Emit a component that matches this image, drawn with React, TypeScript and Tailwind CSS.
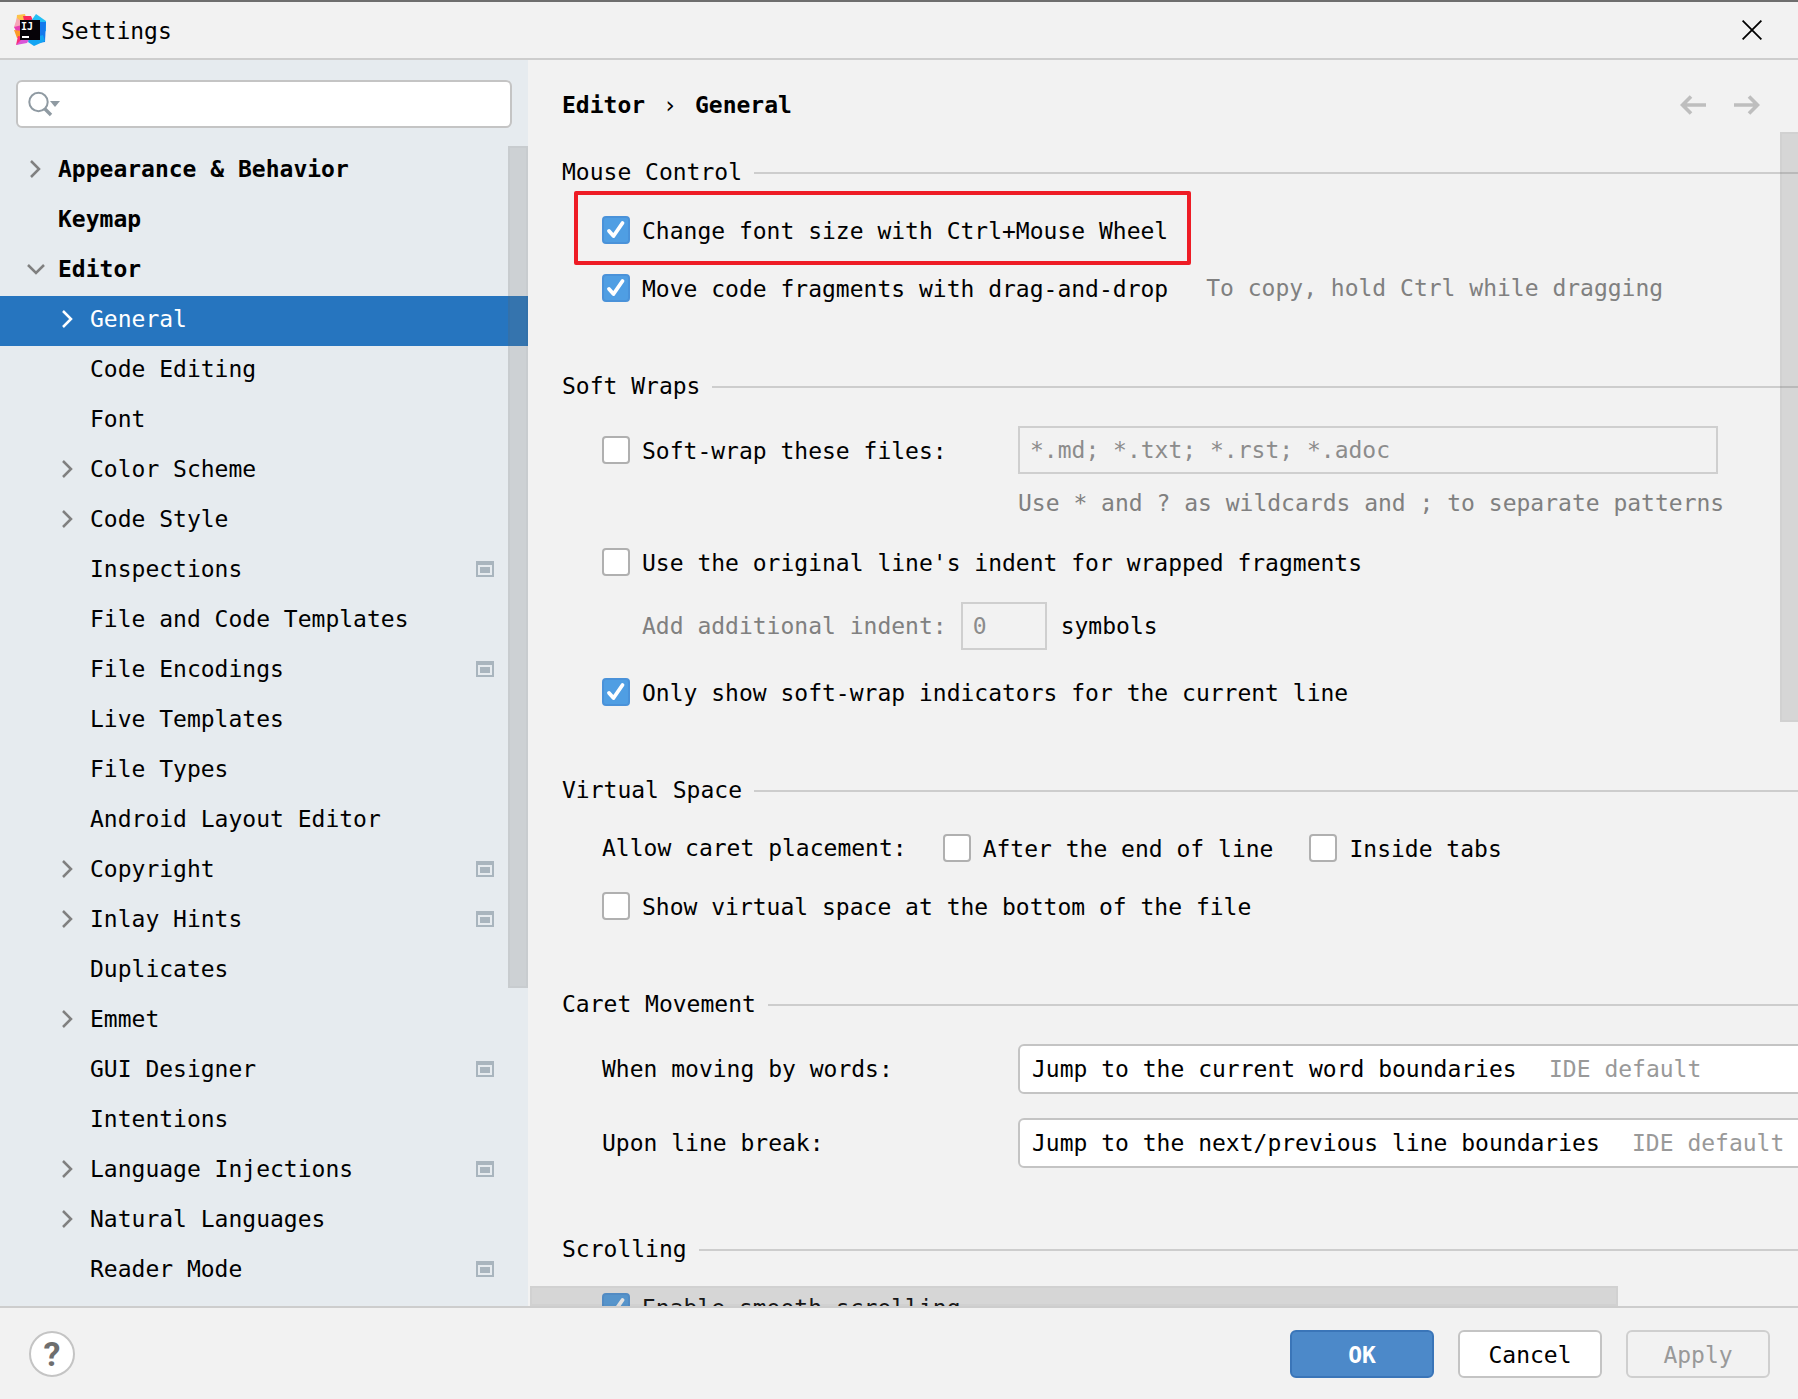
import React, { useState } from "react";

type TreeItem = {
  label: string;
  level: number;
  arrow?: "right" | "down";
  project?: boolean;
};

const treeItems: TreeItem[] = [
  { label: "Appearance & Behavior", level: 1, arrow: "right" },
  { label: "Keymap", level: 1 },
  { label: "Editor", level: 1, arrow: "down" },
  { label: "General", level: 2, arrow: "right" },
  { label: "Code Editing", level: 2 },
  { label: "Font", level: 2 },
  { label: "Color Scheme", level: 2, arrow: "right" },
  { label: "Code Style", level: 2, arrow: "right" },
  { label: "Inspections", level: 2, project: true },
  { label: "File and Code Templates", level: 2 },
  { label: "File Encodings", level: 2, project: true },
  { label: "Live Templates", level: 2 },
  { label: "File Types", level: 2 },
  { label: "Android Layout Editor", level: 2 },
  { label: "Copyright", level: 2, arrow: "right", project: true },
  { label: "Inlay Hints", level: 2, arrow: "right", project: true },
  { label: "Duplicates", level: 2 },
  { label: "Emmet", level: 2, arrow: "right" },
  { label: "GUI Designer", level: 2, project: true },
  { label: "Intentions", level: 2 },
  { label: "Language Injections", level: 2, arrow: "right", project: true },
  { label: "Natural Languages", level: 2, arrow: "right" },
  { label: "Reader Mode", level: 2, project: true },
];

const Logo = () => (
  <svg width="34" height="34" viewBox="0 0 34 34" aria-hidden="true">
    <path d="M4 2 L12 1 L15 12 L8 18 L3 12 Z" fill="#fdc24b" />
    <path d="M4 5 L1 14 L6 17 L9 9 Z" fill="#f7a6b8" />
    <path d="M10 3 L18 3 L21 10 L12 12 Z" fill="#fb2a5b" />
    <path d="M1 14 L9 12 L10 22 L3 18 Z" fill="#e83fb2" />
    <path d="M1 17 L9 18 L9 26 L4 25 Z" fill="#fc9a28" />
    <path d="M5 23 L12 24 L17 27 L3 32 Z" fill="#fa2f77" />
    <path d="M9 26 L17 25 L14 30 L3 32 Z" fill="#d955d8" />
    <path d="M23 1 L33 8 L33 18 L26 20 L18 8 Z" fill="#22bff5" />
    <path d="M26 9 L33 9 L32 29 L25 30 Z" fill="#1479ec" />
    <path d="M16 26 L30 22 L32 28 L21 33 L15 29 Z" fill="#13a5f3" />
    <rect x="7" y="7" width="20" height="20" fill="#060308" />
    <rect x="9" y="23" width="7" height="2" fill="#ffffff" />
    <text x="8" y="17" fontSize="10" fontWeight="700" fill="#ffffff">IJ</text>
  </svg>
);

const Chevron = ({ direction, className }: { direction: "right" | "down"; className: string }) => (
  <svg width="20" height="20" viewBox="0 0 20 20" fill="none" stroke="currentColor" strokeWidth="2.5" className={className} aria-hidden="true">
    {direction === "right" ? <path d="M5 2 L13 10 L5 18" /> : <path d="M2 6 L10 14 L18 6" />}
  </svg>
);

const ProjectIcon = () => (
  <svg width="18" height="16" viewBox="0 0 18 16" aria-hidden="true">
    <path fillRule="evenodd" d="M0 0 H18 V16 H0 Z M2 4 V14 H16 V4 Z" fill="#a9b5be" />
    <rect x="4" y="6" width="10" height="6" fill="#a9b5be" />
  </svg>
);

const Arrow = ({ back }: { back?: boolean }) => (
  <svg width="26" height="20" viewBox="0 0 26 20" fill="none" stroke="#bebebe" strokeWidth="3.6" aria-hidden="true">
    {back ? <path d="M26 10 H3 M11 1.4 L2.5 10 L11 18.6" /> : <path d="M0 10 H23 M15 1.4 L23.5 10 L15 18.6" />}
  </svg>
);

const CheckOption = ({ id, label, checked }: { id: string; label: string; checked?: boolean }) => (
  <div className="flex shrink-0 items-center gap-3">
    <span className="grid size-7">
      <input
        type="checkbox"
        id={id}
        defaultChecked={checked}
        className="peer col-start-1 row-start-1 size-7 appearance-none rounded-sm border-2 border-[#b0b0b0] bg-white checked:border-[#4a92d9] checked:bg-[#4f9ee3]"
      />
      <svg
        viewBox="0 0 28 28"
        fill="none"
        stroke="#ffffff"
        strokeWidth="3.8"
        strokeLinecap="round"
        strokeLinejoin="round"
        className="pointer-events-none invisible col-start-1 row-start-1 size-7 peer-checked:visible"
        aria-hidden="true"
      >
        <path d="M7 15 L11.5 20 L20.5 7" />
      </svg>
    </span>
    <label htmlFor={id} className="pt-[2px]">{label}</label>
  </div>
);

const SectionTitle = ({ title }: { title: string }) => (
  <div className="flex h-10 items-center gap-3">
    <h2 className="shrink-0 pb-[2px]">{title}</h2>
    <div className="h-[2px] flex-1 bg-[#cdcdcd]" />
  </div>
);

const ComboRow = ({ id, label, value }: { id: string; label: string; value: string }) => (
  <div className="flex h-[58px] items-center">
    <label htmlFor={id} className="w-[416px] shrink-0">{label}</label>
    <div className="flex h-[50px] w-[820px] shrink-0 items-center gap-8 rounded-md border-2 border-[#c4c4c4] bg-white px-3">
      <select id={id} className="shrink-0 appearance-none bg-transparent">
        <option>{value}</option>
      </select>
      <span className="shrink-0 text-[#999999]">IDE default</span>
    </div>
  </div>
);

const App = () => {
  const [selected, setSelected] = useState("General");
  const [search, setSearch] = useState("");

  return (
    <div className="flex h-screen flex-col overflow-hidden border-t-2 border-[#6e6e6e] bg-[#f2f2f2] font-['DejaVu_Sans_Mono',monospace] text-[23px] leading-[30px] text-black">
      <header className="flex h-[58px] shrink-0 items-center border-b-2 border-[#cdcdcd] pl-[13px] pr-9">
        <Logo />
        <h1 className="flex-1 pl-[14px] pt-[2px]">Settings</h1>
        <button type="button" aria-label="Close">
          <svg width="20" height="20" viewBox="0 0 20 20" stroke="#000000" strokeWidth="1.8" aria-hidden="true">
            <path d="M0.6 0.6 L19.4 19.4 M19.4 0.6 L0.6 19.4" />
          </svg>
        </button>
      </header>

      <div className="flex min-h-0 flex-1">
        <aside className="flex w-[528px] shrink-0 flex-col bg-[#e6ebef]">
          <div className="px-4 pb-[18px] pt-5">
            <div className="flex h-12 items-center rounded-md border-2 border-[#c4c4c4] bg-white pl-[10px]">
              <svg width="34" height="26" viewBox="0 0 34 26" fill="none" aria-hidden="true">
                <circle cx="10.5" cy="11" r="9.2" stroke="#8f9aa2" strokeWidth="2" />
                <path d="M17 18 L23 24" stroke="#8f9aa2" strokeWidth="3.4" />
                <path d="M22 10 H32 L27 16 Z" fill="#8f9aa2" />
              </svg>
              <input
                type="text"
                aria-label="Search"
                value={search}
                onChange={(event) => setSearch(event.target.value)}
                className="h-full min-w-0 flex-1 bg-transparent px-2 outline-none"
              />
            </div>
          </div>
          <div className="relative min-h-0 flex-1 overflow-hidden">
            <ul>
              {treeItems.map((item) => {
                const active = item.label === selected;
                return (
                  <li key={item.label}>
                    <button
                      type="button"
                      onClick={() => setSelected(item.label)}
                      className={`flex h-[50px] w-full items-center pb-1 pr-[34px] text-left ${item.level === 1 ? "pl-[26px] font-bold" : "pl-[58px]"} ${active ? "bg-[#2675bf] text-white" : ""}`}
                    >
                      <span className="w-8 shrink-0">
                        {item.arrow && <Chevron direction={item.arrow} className={active ? "text-white" : "text-[#808080]"} />}
                      </span>
                      <span className="flex-1">{item.label}</span>
                      {item.project && <ProjectIcon />}
                    </button>
                  </li>
                );
              })}
            </ul>
            <div className="absolute right-0 top-0 h-[842px] w-5 border-2 border-black/2 bg-[#737373]/21" />
          </div>
        </aside>

        <main className="flex min-w-0 flex-1 flex-col">
          <div className="flex h-[72px] shrink-0 items-center justify-between pl-[34px] pr-[38px] pt-[18px]">
            <nav className="flex gap-[18px] font-bold">
              <a href="#editor">Editor</a>
              <span className="font-normal">›</span>
              <a href="#general">General</a>
            </nav>
            <div className="flex gap-7">
              <button type="button" aria-label="Back"><Arrow back /></button>
              <button type="button" aria-label="Forward"><Arrow /></button>
            </div>
          </div>

          <div className="relative min-h-0 flex-1 overflow-hidden">
            <div className="flex flex-col pl-[34px] pt-[21px]">
              <section className="pb-[50px]">
                <SectionTitle title="Mouse Control" />
                <div className="pl-10 pt-2">
                  <div className="relative flex h-[58px] w-fit items-center">
                    <CheckOption id="wheel" label="Change font size with Ctrl+Mouse Wheel" checked />
                    <div className="pointer-events-none absolute -bottom-[6px] -left-7 -right-[23px] -top-[10px] rounded-xs border-4 border-[#ee1c25]" />
                  </div>
                  <div className="flex h-[58px] items-center gap-[38px]">
                    <CheckOption id="drag" label="Move code fragments with drag-and-drop" checked />
                    <span className="shrink-0 text-[#808080]">To copy, hold Ctrl while dragging</span>
                  </div>
                </div>
              </section>

              <section className="pb-[50px]">
                <SectionTitle title="Soft Wraps" />
                <div className="pl-10 pt-[14px]">
                  <div className="flex h-[58px] items-center">
                    <div className="w-[416px] shrink-0">
                      <CheckOption id="softWrap" label="Soft-wrap these files:" />
                    </div>
                    <input
                      type="text"
                      aria-label="Soft-wrap these files:"
                      disabled
                      defaultValue="*.md; *.txt; *.rst; *.adoc"
                      className="h-12 w-[700px] border-2 border-[#cfcfcf] px-[10px] text-[#8c8c8c]"
                    />
                  </div>
                  <p className="mb-[6px] flex h-12 items-center whitespace-nowrap pl-[416px] text-[#808080]">
                    Use * and ? as wildcards and ; to separate patterns
                  </p>
                  <div className="flex h-[58px] items-center">
                    <CheckOption id="indent" label="Use the original line's indent for wrapped fragments" />
                  </div>
                  <div className="mb-2 mt-[6px] flex h-[58px] items-center gap-[14px] pl-10">
                    <label htmlFor="extra" className="text-[#808080]">Add additional indent:</label>
                    <input
                      type="text"
                      id="extra"
                      disabled
                      defaultValue="0"
                      className="h-12 w-[86px] border-2 border-[#cfcfcf] px-[10px] text-[#8c8c8c]"
                    />
                    <span>symbols</span>
                  </div>
                  <div className="flex h-[58px] items-center">
                    <CheckOption id="indicators" label="Only show soft-wrap indicators for the current line" checked />
                  </div>
                </div>
              </section>

              <section className="pb-[50px]">
                <SectionTitle title="Virtual Space" />
                <div className="pl-10 pt-2">
                  <div className="flex h-[58px] items-center gap-9">
                    <span>Allow caret placement:</span>
                    <CheckOption id="lineEnd" label="After the end of line" />
                    <CheckOption id="tabs" label="Inside tabs" />
                  </div>
                  <div className="flex h-[58px] items-center">
                    <CheckOption id="bottom" label="Show virtual space at the bottom of the file" />
                  </div>
                </div>
              </section>

              <section className="pb-[58px]">
                <SectionTitle title="Caret Movement" />
                <div className="flex flex-col gap-4 pl-10 pt-[15px]">
                  <ComboRow id="words" label="When moving by words:" value="Jump to the current word boundaries" />
                  <ComboRow id="breaks" label="Upon line break:" value="Jump to the next/previous line boundaries" />
                </div>
              </section>

              <section>
                <SectionTitle title="Scrolling" />
                <div className="pl-10 pt-2">
                  <div className="flex h-[58px] items-center">
                    <CheckOption id="smooth" label="Enable smooth scrolling" checked />
                  </div>
                </div>
              </section>
            </div>

            <div className="absolute right-0 top-0 h-[590px] w-[18px] border-2 border-r-0 border-black/2 bg-[#737373]/21" />
            <div className="absolute bottom-0 left-[2px] right-[180px] h-5 border-2 border-black/2 bg-[#737373]/21" />
          </div>
        </main>
      </div>

      <footer className="flex h-[93px] shrink-0 items-center gap-6 border-t-2 border-[#cdcdcd] pl-[29px] pr-7">
        <button
          type="button"
          className="mr-auto size-[46px] rounded-full border-2 border-[#c4c4c4] bg-white font-['Roboto',sans-serif] text-[34px] font-bold text-[#6e6e6e]"
        >
          ?
        </button>
        <button type="button" className="h-12 w-36 rounded-md border-2 border-[#3a75b8] bg-[#4c89c9] pt-[2px] font-bold text-white">
          OK
        </button>
        <button type="button" className="h-12 w-36 rounded-md border-2 border-[#c4c4c4] bg-white pt-[2px]">
          Cancel
        </button>
        <button type="button" disabled className="h-12 w-36 rounded-md border-2 border-[#cfcfcf] pt-[2px] text-[#999999]">
          Apply
        </button>
      </footer>
    </div>
  );
};

export default App;
